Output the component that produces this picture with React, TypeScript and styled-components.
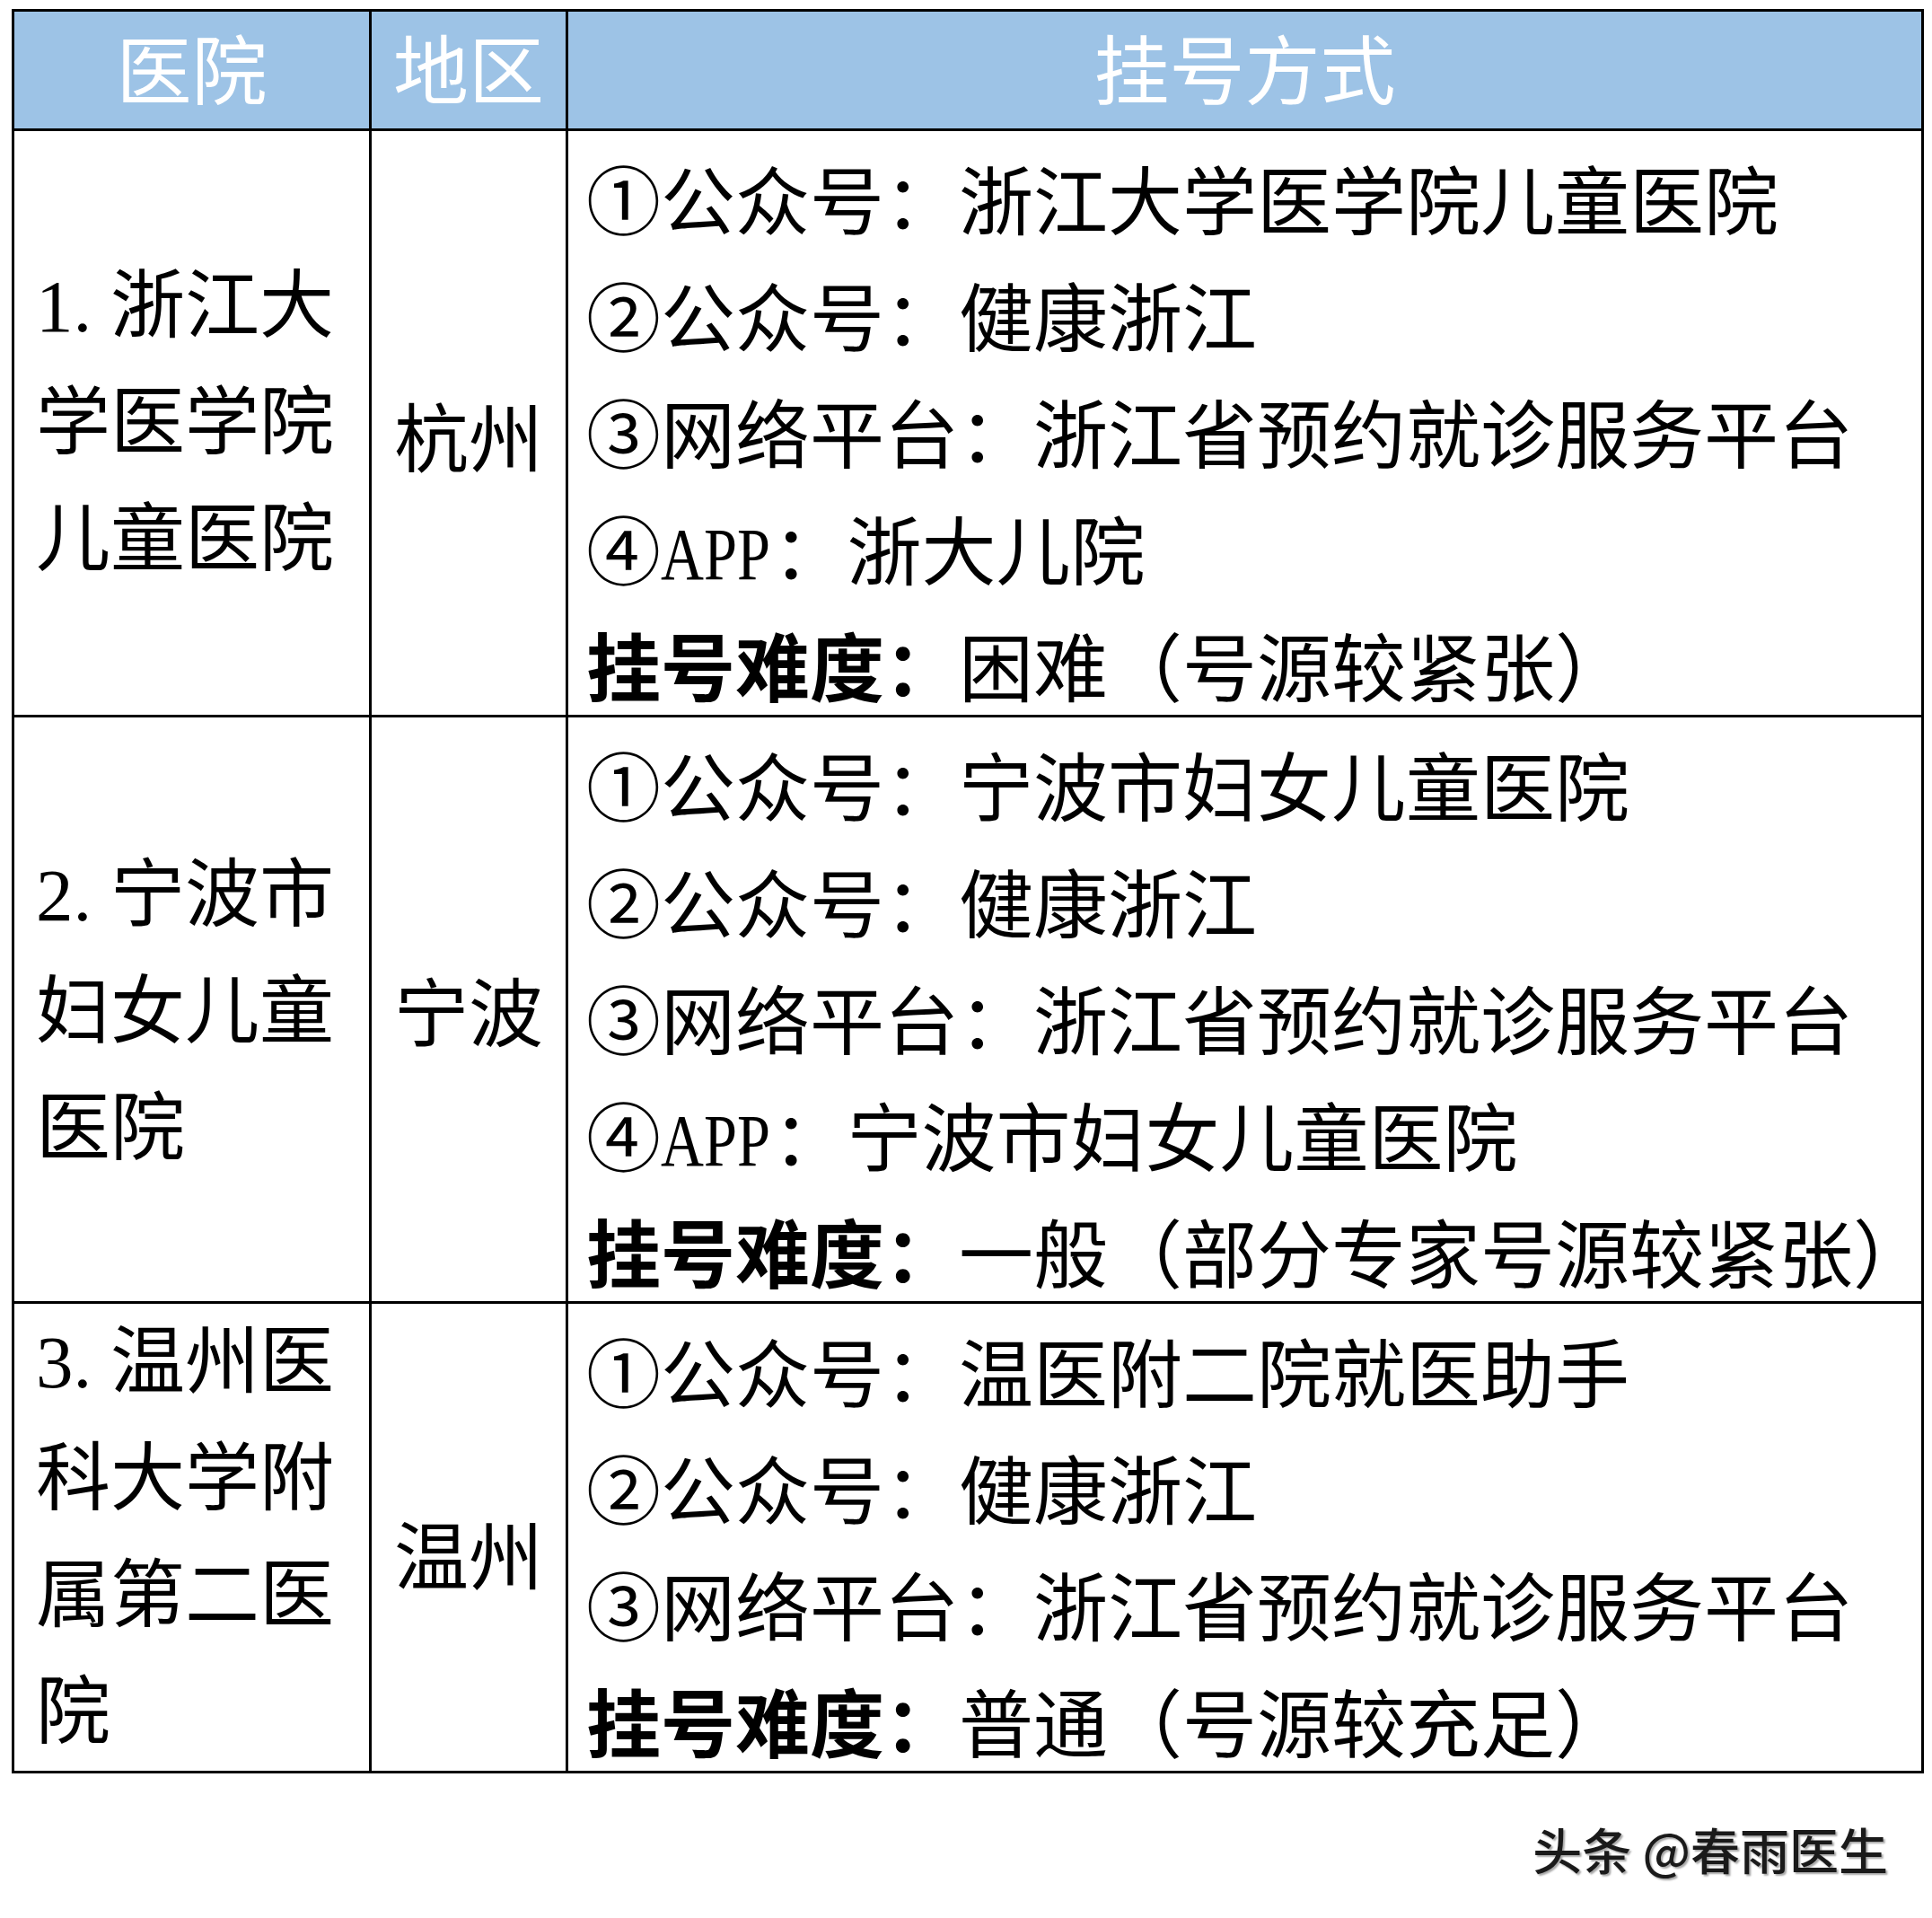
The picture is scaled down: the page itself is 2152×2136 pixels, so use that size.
import React from "react";
import styled, { createGlobalStyle } from "styled-components";

const GlobalStyle = createGlobalStyle`
  html, body {
    margin: 0;
    padding: 0;
    background: #ffffff;
  }
  body {
    font-family: "Liberation Serif", "Noto Sans CJK SC", serif;
    color: #000000;
  }
`;

const Page = styled.div`
  width: 2152px;
  min-height: 2136px;
  box-sizing: border-box;
  padding: 10px 0 0 13px;
`;

const Table = styled.div`
  display: grid;
  grid-template-columns: 395px 216px 1507px;
  gap: 3px;
  padding: 3px;
  width: 2130px;
  box-sizing: border-box;
  background: #000000;
  font-size: 83px;
`;

const HeadCell = styled.div`
  height: 130px;
  box-sizing: border-box;
  padding-bottom: 9px;
  display: flex;
  align-items: center;
  justify-content: center;
  background: #9dc3e6;
  color: #ffffff;
  font-family: "Noto Sans CJK SC", sans-serif;
  font-size: 84px;
  line-height: 1;
  white-space: nowrap;
`;

const NameCell = styled.div<{ $shift: number }>`
  background: #ffffff;
  display: flex;
  flex-direction: column;
  justify-content: center;
  box-sizing: border-box;
  padding: ${(p) => p.$shift}px 0 0 24px;
`;

const NameLine = styled.div`
  line-height: 130px;
  white-space: nowrap;
`;

const RegionCell = styled.div<{ $drop: number }>`
  background: #ffffff;
  display: flex;
  align-items: center;
  justify-content: center;
  box-sizing: border-box;
  padding-top: ${(p) => p.$drop}px;
  line-height: 130px;
  white-space: nowrap;
`;

const WayCell = styled.div`
  background: #ffffff;
  display: flex;
  flex-direction: column;
  box-sizing: border-box;
  padding-left: 20px;
`;

const WayLine = styled.div`
  height: 130px;
  box-sizing: border-box;
  padding-top: 33px;
  line-height: 97px;
  white-space: nowrap;
`;

const Strong = styled.span`
  font-weight: 700;
`;

const Narrow = styled.span`
  display: inline-block;
  width: 1.5em;
  white-space: nowrap;
`;

const Squeeze = styled.span`
  display: inline-block;
  transform: scaleX(0.8);
  transform-origin: left center;
`;

const Footer = styled.div`
  display: flex;
  justify-content: flex-end;
  padding: 53px 49px 0 0;
`;

const Watermark = styled.div`
  font-family: "Noto Sans CJK SC", sans-serif;
  font-size: 55px;
  font-weight: 500;
  line-height: 60px;
  color: #1a1a1a;
  text-shadow: 2px 2px 2px rgba(0, 0, 0, 0.35);
  white-space: nowrap;
`;

type Row = {
  name: string[];
  region: string;
  drop: number;
  shift: number;
  ways: React.ReactNode[];
  level: string;
};

const app = (
  <>
    ④<Narrow>
      <Squeeze>APP</Squeeze>
    </Narrow>
    ：
  </>
);

const rows: Row[] = [
  {
    name: ["1. 浙江大", "学医学院", "儿童医院"],
    region: "杭州",
    drop: 40,
    shift: 0,
    ways: [
      "①公众号：浙江大学医学院儿童医院",
      "②公众号：健康浙江",
      "③网络平台：浙江省预约就诊服务平台",
      <>
        {app}浙大儿院
      </>,
    ],
    level: "困难（号源较紧张）",
  },
  {
    name: ["2. 宁波市", "妇女儿童", "医院"],
    region: "宁波",
    drop: 14,
    shift: 6,
    ways: [
      "①公众号：宁波市妇女儿童医院",
      "②公众号：健康浙江",
      "③网络平台：浙江省预约就诊服务平台",
      <>
        {app}宁波市妇女儿童医院
      </>,
    ],
    level: "一般（部分专家号源较紧张）",
  },
  {
    name: ["3. 温州医", "科大学附", "属第二医", "院"],
    region: "温州",
    drop: 48,
    shift: 0,
    ways: [
      "①公众号：温医附二院就医助手",
      "②公众号：健康浙江",
      "③网络平台：浙江省预约就诊服务平台",
    ],
    level: "普通（号源较充足）",
  },
];

export default function App() {
  return (
    <Page>
      <GlobalStyle />
      <Table>
        <HeadCell>医院</HeadCell>
        <HeadCell>地区</HeadCell>
        <HeadCell>挂号方式</HeadCell>
        {rows.map((row, i) => (
          <React.Fragment key={i}>
            <NameCell $shift={row.shift}>
              {row.name.map((line, j) => (
                <NameLine key={j}>{line}</NameLine>
              ))}
            </NameCell>
            <RegionCell $drop={row.drop}>{row.region}</RegionCell>
            <WayCell>
              {row.ways.map((w, j) => (
                <WayLine key={j}>{w}</WayLine>
              ))}
              <WayLine>
                <Strong>挂号难度：</Strong>
                {row.level}
              </WayLine>
            </WayCell>
          </React.Fragment>
        ))}
      </Table>
      <Footer>
        <Watermark>头条 @春雨医生</Watermark>
      </Footer>
    </Page>
  );
}
